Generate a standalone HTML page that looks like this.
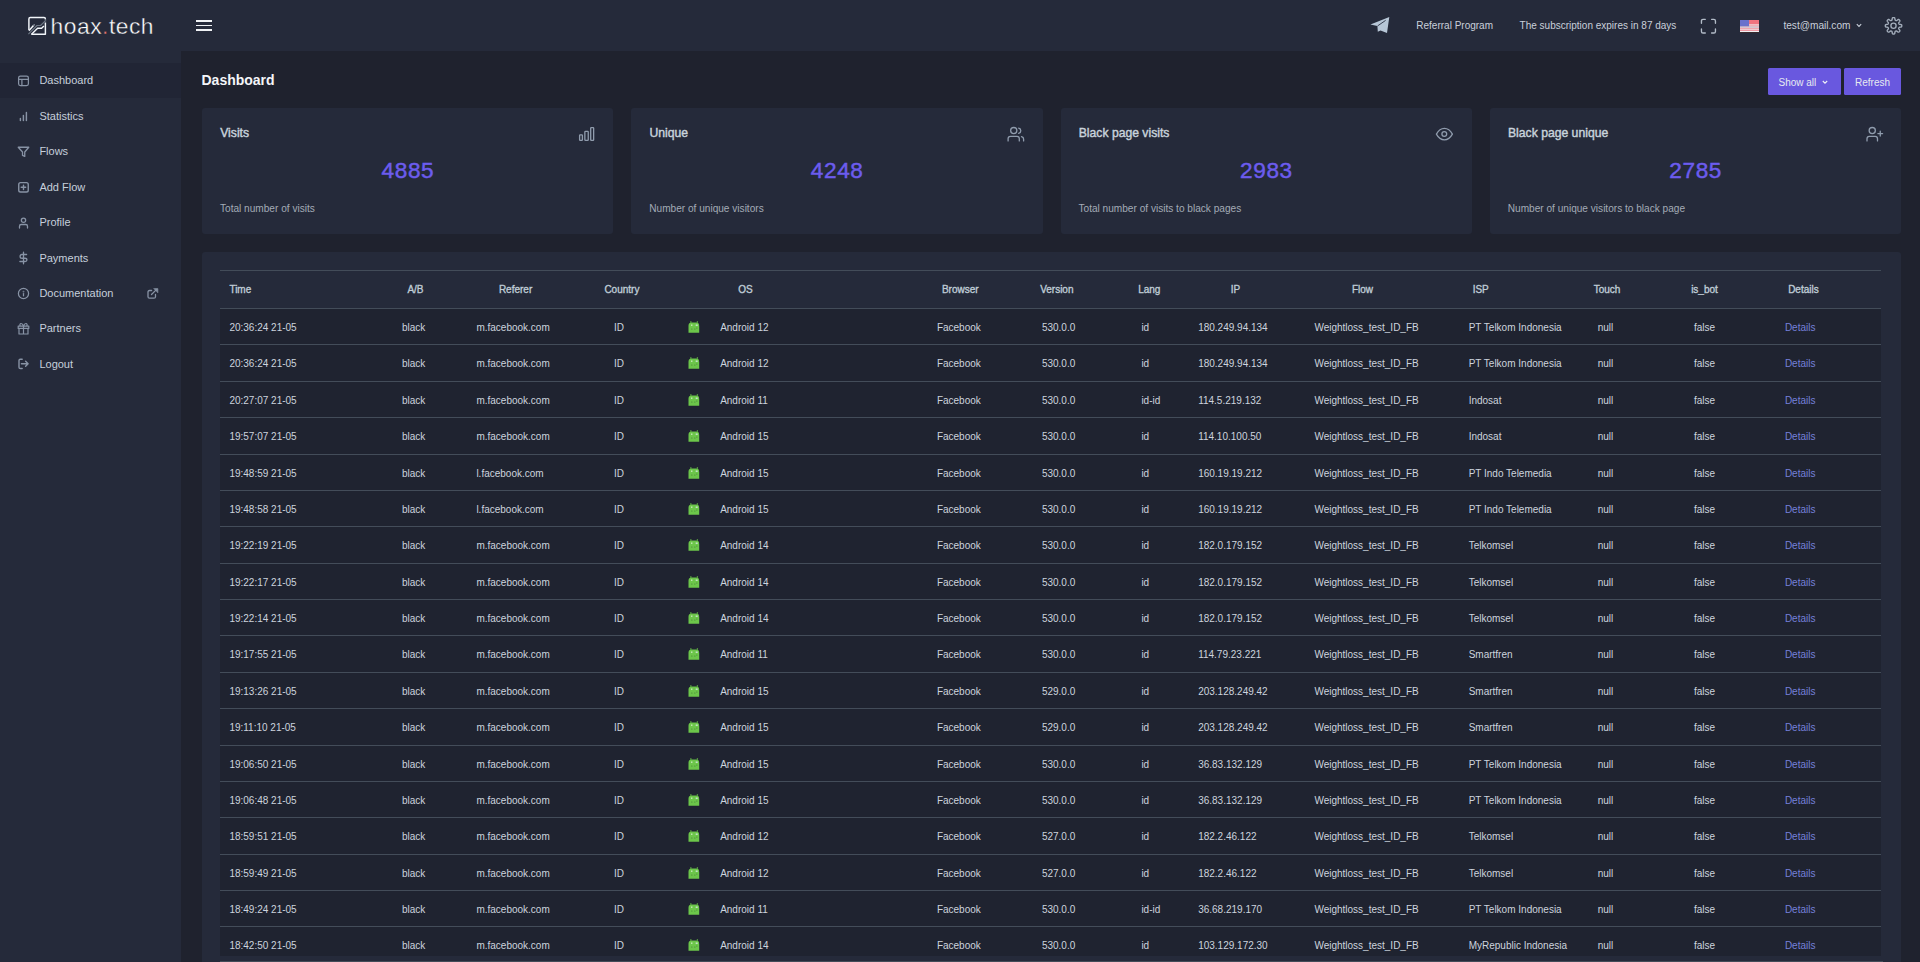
<!DOCTYPE html><html><head><meta charset="utf-8"><style>
*{box-sizing:border-box;margin:0;padding:0}
html,body{width:1920px;height:962px;overflow:hidden;background:#1f222e;font-family:"Liberation Sans",sans-serif;color:#cdd4de}
.abs{position:absolute}
#top{position:absolute;left:0;top:0;width:1920px;height:51px;background:#252a3a}
#side{position:absolute;left:0;top:51px;width:181px;height:911px;background:#252a3a}
.nav{position:absolute;left:0;width:181px;height:35px}
.nav.act{background:#212535}
.nav span{position:absolute;left:39.4px;top:0.7px;line-height:35px;font-size:11px;color:#c6cfdb}
.nav svg{position:absolute;left:17px;top:11.5px}
.card{position:absolute;background:#252a3a;border-radius:3px}
.ct{position:absolute;left:18.2px;top:16.5px;font-size:12.2px;font-weight:normal;color:#c9d3dc;line-height:16px;-webkit-text-stroke:0.4px #c9d3dc}
.cn{position:absolute;left:0;width:100%;text-align:center;top:47.6px;font-size:22.6px;color:#6c5cee;line-height:30px;letter-spacing:0.6px;text-indent:0.6px;-webkit-text-stroke:0.45px #6c5cee}
.cs{position:absolute;left:18px;top:94px;font-size:10.1px;color:#a3aab6;line-height:14px}
.ci{position:absolute}
#tbl{position:absolute;left:220px;top:270px;width:1661px}
.hr{position:absolute;left:0;width:1661px;height:1px;background:#434c59}
.row{position:absolute;left:0;width:1661px;background:#1f2330}
.row span,.hd span{position:absolute;top:0;white-space:pre;font-size:10px}
.hd span{font-weight:normal;color:#bfcbd5;line-height:37.6px;-webkit-text-stroke:0.35px #bfcbd5}
.row span{line-height:38.2px}
.row .lk{color:#7580da}
.and{position:absolute;top:12px;left:687.5px}
.btn{position:absolute;top:68px;height:27px;background:#6958df;border-radius:1.5px;color:#e6eaf0;font-size:10px;line-height:30.2px}
.tb{position:absolute;font-size:10px;color:#c9d0da;line-height:14px;top:19px;white-space:pre}
</style></head><body>

<div id="top">
<svg class="abs" style="left:25px;top:13px" width="25" height="25" viewBox="0 0 25 25" fill="none" stroke="#f2f6fa" stroke-width="1.45" stroke-linejoin="round">
<path d="M3.9 16.9V5.9Q3.9 4.55 5.3 4.55H19Q20.4 4.55 20.4 6V6.4"/>
<path d="M20.4 9.6V21.2H6.6"/>
<path d="M3.9 17.8L8.5 12.6"/>
<path d="M6.3 21.4L12.6 15.3H16.6L18.9 13"/>
<path d="M3.4 21.1L12 12.5H15.6L20 8.1" stroke="#6e7784" stroke-width="1.15"/>
<rect x="8.5" y="11.2" width="1.4" height="1.4" fill="#8c96a2" stroke="none"/>
<rect x="19.6" y="7.2" width="1.6" height="1.3" fill="#6e7784" stroke="none"/>
</svg>
<div class="abs" style="left:50.6px;top:8.5px;font-size:22.8px;line-height:34px;color:#ffffff;letter-spacing:0.5px;-webkit-text-stroke:0.4px #252a3a">hoax<span style="color:#f07872">.</span>tech</div>
<div class="abs" style="left:196px;top:20.1px;width:16px;height:1.7px;background:#f0f2f5"></div>
<div class="abs" style="left:196px;top:24.8px;width:16px;height:1.7px;background:#f0f2f5"></div>
<div class="abs" style="left:196px;top:29.4px;width:16px;height:1.7px;background:#f0f2f5"></div>
<svg class="abs" style="left:1368px;top:13px" width="24" height="24" viewBox="0 0 24 24"><path d="M2.4 11.5L21.3 4L19 20L12.5 17.4L9.8 18.8L9.4 13.1Z" fill="#b7c6d6"/><path d="M9.6 12.9L17.6 7.4" stroke="#2a3142" stroke-width="0.9"/></svg>
<div class="tb" style="left:1416.3px">Referral Program</div>
<div class="tb" style="left:1519.6px">The subscription expires in 87 days</div>
<svg class="abs" style="left:1700px;top:17.5px" width="17" height="17" viewBox="0 0 17 17" fill="none" stroke="#b3bcc8" stroke-width="1.35" stroke-linecap="round"><path d="M1.45 5.3V2.9Q1.45 1.35 3 1.35H5.3M11.6 1.35H13.9Q15.45 1.35 15.45 2.9V5.3M15.45 11V13.4Q15.45 14.95 13.9 14.95H11.6M5.3 14.95H3Q1.45 14.95 1.45 13.4V11"/></svg>
<svg class="abs" style="left:1740px;top:19.5px" width="19" height="13" viewBox="0 0 19 13"><rect width="19" height="12" fill="#eef0f4"/><rect x="9" y="0" width="10" height="4.4" fill="#f0737f"/><rect y="5.5" width="19" height="1" fill="#f0737f"/><rect y="7.6" width="19" height="1" fill="#f0737f"/><rect y="9.7" width="19" height="1" fill="#f0737f"/><rect y="6.5" width="19" height="1.1" fill="#c4cbd6"/><rect width="9" height="6.3" fill="#6a72cc"/><rect y="12" width="19" height="0.9" fill="#3a2a2a"/></svg>
<div class="tb" style="left:1783.4px;font-size:10.15px">test@mail.com</div>
<svg class="abs" style="left:1856px;top:23.3px" width="6" height="5" viewBox="0 0 6 5" fill="none" stroke="#c9d0da" stroke-width="1.1"><path d="M0.8 1.2L3 3.4L5.2 1.2"/></svg>
<svg class="abs" style="left:1881px;top:14px" width="24" height="24" viewBox="0 0 24 24" fill="none" stroke="#a3adbb" stroke-width="1.35" stroke-linecap="round" stroke-linejoin="round"><path d="M12.55 3.55 L12.77 3.56 L12.98 3.58 L13.19 3.62 L13.40 3.69 L13.60 3.84 L13.76 4.14 L13.88 4.63 L13.95 5.24 L14.01 5.73 L14.10 6.03 L14.21 6.19 L14.34 6.29 L14.47 6.37 L14.61 6.43 L14.75 6.49 L14.89 6.54 L15.03 6.60 L15.18 6.64 L15.34 6.66 L15.54 6.63 L15.81 6.48 L16.20 6.17 L16.68 5.79 L17.11 5.52 L17.44 5.43 L17.68 5.46 L17.88 5.56 L18.06 5.68 L18.23 5.82 L18.38 5.97 L18.53 6.12 L18.67 6.29 L18.79 6.47 L18.89 6.67 L18.92 6.91 L18.83 7.24 L18.56 7.67 L18.18 8.15 L17.87 8.54 L17.72 8.81 L17.69 9.01 L17.71 9.17 L17.75 9.32 L17.81 9.46 L17.86 9.60 L17.92 9.74 L17.98 9.88 L18.06 10.01 L18.16 10.14 L18.32 10.25 L18.62 10.34 L19.11 10.40 L19.72 10.47 L20.21 10.59 L20.51 10.75 L20.66 10.95 L20.73 11.16 L20.77 11.37 L20.79 11.58 L20.80 11.80 L20.79 12.02 L20.77 12.23 L20.73 12.44 L20.66 12.65 L20.51 12.85 L20.21 13.01 L19.72 13.13 L19.11 13.20 L18.62 13.26 L18.32 13.35 L18.16 13.46 L18.06 13.59 L17.98 13.72 L17.92 13.86 L17.86 14.00 L17.81 14.14 L17.75 14.28 L17.71 14.43 L17.69 14.59 L17.72 14.79 L17.87 15.06 L18.18 15.45 L18.56 15.93 L18.83 16.36 L18.92 16.69 L18.89 16.93 L18.79 17.13 L18.67 17.31 L18.53 17.48 L18.38 17.63 L18.23 17.78 L18.06 17.92 L17.88 18.04 L17.68 18.14 L17.44 18.17 L17.11 18.08 L16.68 17.81 L16.20 17.43 L15.81 17.12 L15.54 16.97 L15.34 16.94 L15.18 16.96 L15.03 17.00 L14.89 17.06 L14.75 17.11 L14.61 17.17 L14.47 17.23 L14.34 17.31 L14.21 17.41 L14.10 17.57 L14.01 17.87 L13.95 18.36 L13.88 18.97 L13.76 19.46 L13.60 19.76 L13.40 19.91 L13.19 19.98 L12.98 20.02 L12.77 20.04 L12.55 20.05 L12.33 20.04 L12.12 20.02 L11.91 19.98 L11.70 19.91 L11.50 19.76 L11.34 19.46 L11.22 18.97 L11.15 18.36 L11.09 17.87 L11.00 17.57 L10.89 17.41 L10.76 17.31 L10.63 17.23 L10.49 17.17 L10.35 17.11 L10.21 17.06 L10.07 17.00 L9.92 16.96 L9.76 16.94 L9.56 16.97 L9.29 17.12 L8.90 17.43 L8.42 17.81 L7.99 18.08 L7.66 18.17 L7.42 18.14 L7.22 18.04 L7.04 17.92 L6.87 17.78 L6.72 17.63 L6.57 17.48 L6.43 17.31 L6.31 17.13 L6.21 16.93 L6.18 16.69 L6.27 16.36 L6.54 15.93 L6.92 15.45 L7.23 15.06 L7.38 14.79 L7.41 14.59 L7.39 14.43 L7.35 14.28 L7.29 14.14 L7.24 14.00 L7.18 13.86 L7.12 13.72 L7.04 13.59 L6.94 13.46 L6.78 13.35 L6.48 13.26 L5.99 13.20 L5.38 13.13 L4.89 13.01 L4.59 12.85 L4.44 12.65 L4.37 12.44 L4.33 12.23 L4.31 12.02 L4.30 11.80 L4.31 11.58 L4.33 11.37 L4.37 11.16 L4.44 10.95 L4.59 10.75 L4.89 10.59 L5.38 10.47 L5.99 10.40 L6.48 10.34 L6.78 10.25 L6.94 10.14 L7.04 10.01 L7.12 9.88 L7.18 9.74 L7.24 9.60 L7.29 9.46 L7.35 9.32 L7.39 9.17 L7.41 9.01 L7.38 8.81 L7.23 8.54 L6.92 8.15 L6.54 7.67 L6.27 7.24 L6.18 6.91 L6.21 6.67 L6.31 6.47 L6.43 6.29 L6.57 6.12 L6.72 5.97 L6.87 5.82 L7.04 5.68 L7.22 5.56 L7.42 5.46 L7.66 5.43 L7.99 5.52 L8.42 5.79 L8.90 6.17 L9.29 6.48 L9.56 6.63 L9.76 6.66 L9.92 6.64 L10.07 6.60 L10.21 6.54 L10.35 6.49 L10.49 6.43 L10.63 6.37 L10.76 6.29 L10.89 6.19 L11.00 6.03 L11.09 5.73 L11.15 5.24 L11.22 4.63 L11.34 4.14 L11.50 3.84 L11.70 3.69 L11.91 3.62 L12.12 3.58 L12.33 3.56Z"/><circle cx="12.5" cy="11.75" r="2.6"/></svg>
</div>
<div id="side">
<div class="nav act" style="top:11.5px"><span>Dashboard</span></div>
<div class="nav" style="top:47px"><span>Statistics</span></div>
<div class="nav" style="top:82.5px"><span>Flows</span></div>
<div class="nav" style="top:118px"><span>Add Flow</span></div>
<div class="nav" style="top:153.5px"><span>Profile</span></div>
<div class="nav" style="top:189px"><span>Payments</span></div>
<div class="nav" style="top:224.5px"><span>Documentation</span></div>
<div class="nav" style="top:259.5px"><span>Partners</span></div>
<div class="nav" style="top:295px"><span>Logout</span></div>
</div>
<svg class="abs" style="left:12px;top:69px" width="24" height="24" viewBox="0 0 24 24" fill="none" stroke="#8893a5" stroke-width="1.25" stroke-linecap="round" stroke-linejoin="round"><rect x="6.6" y="7.1" width="9.8" height="9.5" rx="1.8"/><path d="M6.6 10.4H16.4M9.9 10.4V16.6"/></svg>
<svg class="abs" style="left:12px;top:104px" width="24" height="24" viewBox="0 0 24 24" fill="none" stroke="#8893a5" stroke-width="1.45" stroke-linecap="round" stroke-linejoin="round"><path d="M8.4 14.5V16.5M11.4 11.5V16.5M14.4 8.5V16.5"/></svg>
<svg class="abs" style="left:12px;top:140px" width="24" height="24" viewBox="0 0 24 24" fill="none" stroke="#8893a5" stroke-width="1.3" stroke-linecap="round" stroke-linejoin="round"><path d="M6.25 7.25H16.75L12.75 12V16.4L10.5 15.4V12Z"/></svg>
<svg class="abs" style="left:12px;top:175px" width="24" height="24" viewBox="0 0 24 24" fill="none" stroke="#8893a5" stroke-width="1.4" stroke-linecap="round" stroke-linejoin="round"><rect x="6.75" y="7.6" width="9.5" height="9.4" rx="1.8"/><path d="M11.5 10.1V14.6M9.2 12.3H13.7"/></svg>
<svg class="abs" style="left:12px;top:211px" width="24" height="24" viewBox="0 0 24 24" fill="none" stroke="#8893a5" stroke-width="1.3" stroke-linecap="round" stroke-linejoin="round"><circle cx="11.5" cy="9.25" r="2.15"/><path d="M7.5 17V15.2Q7.5 13.5 9.2 13.5H13.8Q15.5 13.5 15.5 15.2V17"/></svg>
<svg class="abs" style="left:12px;top:246px" width="24" height="24" viewBox="0 0 24 24" fill="none" stroke="#8893a5" stroke-width="1.3" stroke-linecap="round" stroke-linejoin="round"><path d="M14.6 8.5H10Q8.1 8.5 8.1 10.4Q8.1 12.25 10 12.25H13Q14.9 12.25 14.9 14Q14.9 15.5 13 15.5H7.9M11.5 6.2V17.8"/></svg>
<svg class="abs" style="left:12px;top:281px" width="24" height="24" viewBox="0 0 24 24" fill="none" stroke="#8893a5" stroke-width="1.25" stroke-linecap="round" stroke-linejoin="round"><circle cx="11.5" cy="12.5" r="5.1"/><path d="M11.5 12.6V14.8"/><circle cx="11.5" cy="10.5" r="0.25" fill="#8893a5"/></svg>
<svg class="abs" style="left:12px;top:316px" width="24" height="24" viewBox="0 0 24 24" fill="none" stroke="#8893a5" stroke-width="1.2" stroke-linecap="round" stroke-linejoin="round"><path d="M7 12.5V18H16V12.5M6.2 10.1H16.8V12.4H6.2ZM11.5 10.1V18M11.5 10Q10.5 7.3 8.8 7.5Q7.4 7.8 8.2 10M11.5 10Q12.5 7.3 14.2 7.5Q15.6 7.8 14.8 10"/></svg>
<svg class="abs" style="left:12px;top:352px" width="24" height="24" viewBox="0 0 24 24" fill="none" stroke="#8893a5" stroke-width="1.4" stroke-linecap="round" stroke-linejoin="round"><path d="M10.2 7.3H8.3Q7 7.3 7 8.6V15.2Q7 16.5 8.3 16.5H10.2M9.4 11.8H16M13.6 9.3L16.1 11.8L13.6 14.3"/></svg>
<svg class="abs" style="left:140px;top:281px" width="24" height="24" viewBox="0 0 24 24" fill="none" stroke="#8893a5" stroke-width="1.3" stroke-linecap="round" stroke-linejoin="round"><path d="M11.6 9.5H9.5Q8 9.5 8 11V15.7Q8 17.2 9.5 17.2H14Q15.5 17.2 15.5 15.7V13.4M11.5 13.5L16.4 8.6"/><path d="M14 7.6H17.9V11.5Z" fill="#8893a5" stroke-width="0.6"/></svg>
<div class="abs" style="left:201.5px;top:71px;font-size:14px;font-weight:bold;color:#f4f6f9;line-height:18px">Dashboard</div>
<div class="btn" style="left:1767.5px;width:73px"><span class="abs" style="left:11px">Show all</span><svg class="abs" style="left:54px;top:11.8px" width="6" height="5" viewBox="0 0 6 5" fill="none" stroke="#eef0f6" stroke-width="1.1"><path d="M0.8 1L3 3.2L5.2 1"/></svg></div>
<div class="btn" style="left:1844px;width:57px"><span class="abs" style="left:11px">Refresh</span></div>
<div class="card" style="left:202px;top:108px;width:411.25px;height:126px"><div class="ct">Visits</div><div class="cn">4885</div><div class="cs">Total number of visits</div></div>
<svg class="abs" style="left:575px;top:122px" width="24" height="24" viewBox="0 0 24 24" fill="none" stroke="#909cad" stroke-width="1.3" stroke-linecap="round" stroke-linejoin="round"><rect x="4.6" y="12.85" width="2.8" height="5.6" rx="0.6"/><rect x="9.85" y="9.35" width="3.4" height="9.1" rx="0.6"/><rect x="15.7" y="5.6" width="2.95" height="12.85" rx="0.6"/></svg>
<div class="card" style="left:631.25px;top:108px;width:411.25px;height:126px"><div class="ct">Unique</div><div class="cn">4248</div><div class="cs">Number of unique visitors</div></div>
<svg class="abs" style="left:1004px;top:122px" width="24" height="24" viewBox="0 0 24 24" fill="none" stroke="#909cad" stroke-width="1.3" stroke-linecap="round" stroke-linejoin="round"><circle cx="9.75" cy="8.6" r="3.1"/><path d="M4.1 18.9V16.6Q4.1 14.3 6.4 14.3H13Q15.3 14.3 15.3 16.6V18.9M14.7 6.2A2.6 2.6 0 0 1 14.7 11.3M17.5 14.6Q19.6 15.2 19.6 17V18.9"/></svg>
<div class="card" style="left:1060.5px;top:108px;width:411.25px;height:126px"><div class="ct">Black page visits</div><div class="cn">2983</div><div class="cs">Total number of visits to black pages</div></div>
<svg class="abs" style="left:1432px;top:122px" width="24" height="24" viewBox="0 0 24 24" fill="none" stroke="#909cad" stroke-width="1.3" stroke-linecap="round" stroke-linejoin="round"><path d="M4.4 12.1C6.5 8.3 9.2 6.4 12.4 6.4C15.6 6.4 18.3 8.3 20.4 12.1C18.3 15.9 15.6 17.8 12.4 17.8C9.2 17.8 6.5 15.9 4.4 12.1Z"/><circle cx="12.3" cy="12" r="2.4"/></svg>
<div class="card" style="left:1489.75px;top:108px;width:411.25px;height:126px"><div class="ct">Black page unique</div><div class="cn">2785</div><div class="cs">Number of unique visitors to black page</div></div>
<svg class="abs" style="left:1862px;top:122px" width="24" height="24" viewBox="0 0 24 24" fill="none" stroke="#909cad" stroke-width="1.3" stroke-linecap="round" stroke-linejoin="round"><circle cx="10.25" cy="8.6" r="3.1"/><path d="M5 18.9V16.7Q5 14.4 7.3 14.4H13.2Q15.5 14.4 15.5 16.7V18.9M15.9 11.6H20.6M18.25 9.2V14"/></svg>
<div class="card" style="left:202px;top:252px;width:1699px;height:740px"></div>
<div id="tbl">
<div class="hr" style="top:0"></div>
<div class="hd abs" style="left:0;top:1px;width:1661px;height:37px">
<span class="" style="left:9.40px">Time</span>
<span class="" style="left:187.40px">A/B</span>
<span class="" style="left:278.90px">Referer</span>
<span class="" style="left:384.40px">Country</span>
<span class="" style="left:518.15px">OS</span>
<span class="" style="left:721.90px">Browser</span>
<span class="" style="left:820.15px">Version</span>
<span class="" style="left:918.15px">Lang</span>
<span class="" style="left:1010.65px">IP</span>
<span class="" style="left:1131.90px">Flow</span>
<span class="" style="left:1252.65px">ISP</span>
<span class="" style="left:1373.65px">Touch</span>
<span class="" style="left:1471.15px">is_bot</span>
<span class="" style="left:1568.15px">Details</span>
</div>
<div class="hr" style="top:38.000px"></div>
<div class="row" style="top:39.000px;height:35.375px">
<span class="" style="left:9.40px">20:36:24 21-05</span>
<span class="" style="left:181.90px">black</span>
<span class="" style="left:256.40px">m.facebook.com</span>
<span class="" style="left:393.90px">ID</span>
<span class="" style="left:500.15px">Android 12</span>
<span class="" style="left:716.90px">Facebook</span>
<span class="" style="left:821.90px">530.0.0</span>
<span class="" style="left:921.40px">id</span>
<span class="" style="left:978.15px">180.249.94.134</span>
<span class="" style="left:1094.40px">Weightloss_test_ID_FB</span>
<span class="" style="left:1248.65px">PT Telkom Indonesia</span>
<span class="" style="left:1377.65px">null</span>
<span class="" style="left:1473.90px">false</span>
<span class="lk" style="left:1564.90px">Details</span>
<svg class="and" style="left:467.5px" width="13" height="13" viewBox="0 0 13 13"><path d="M0.5 11.8V4.7Q0.5 1.5 3.7 1.5H8Q11.2 1.5 11.2 4.7V11.8Z" fill="#6cc64a"/><circle cx="2.9" cy="1.1" r="0.75" fill="#6cc64a"/><circle cx="9.4" cy="1.1" r="0.75" fill="#6cc64a"/><rect x="3.1" y="3.6" width="1.3" height="1.1" fill="#eef6ea"/><rect x="7.7" y="3.6" width="2" height="1.1" fill="#e4ecf6"/><circle cx="3.9" cy="8.1" r="0.5" fill="#3d6a34"/><circle cx="6.9" cy="8.1" r="0.5" fill="#3d6a34"/><circle cx="8.9" cy="7.1" r="0.5" fill="#3d6a34"/></svg>
</div>
<div class="hr" style="top:74.375px"></div>
<div class="row" style="top:75.375px;height:35.375px">
<span class="" style="left:9.40px">20:36:24 21-05</span>
<span class="" style="left:181.90px">black</span>
<span class="" style="left:256.40px">m.facebook.com</span>
<span class="" style="left:393.90px">ID</span>
<span class="" style="left:500.15px">Android 12</span>
<span class="" style="left:716.90px">Facebook</span>
<span class="" style="left:821.90px">530.0.0</span>
<span class="" style="left:921.40px">id</span>
<span class="" style="left:978.15px">180.249.94.134</span>
<span class="" style="left:1094.40px">Weightloss_test_ID_FB</span>
<span class="" style="left:1248.65px">PT Telkom Indonesia</span>
<span class="" style="left:1377.65px">null</span>
<span class="" style="left:1473.90px">false</span>
<span class="lk" style="left:1564.90px">Details</span>
<svg class="and" style="left:467.5px" width="13" height="13" viewBox="0 0 13 13"><path d="M0.5 11.8V4.7Q0.5 1.5 3.7 1.5H8Q11.2 1.5 11.2 4.7V11.8Z" fill="#6cc64a"/><circle cx="2.9" cy="1.1" r="0.75" fill="#6cc64a"/><circle cx="9.4" cy="1.1" r="0.75" fill="#6cc64a"/><rect x="3.1" y="3.6" width="1.3" height="1.1" fill="#eef6ea"/><rect x="7.7" y="3.6" width="2" height="1.1" fill="#e4ecf6"/><circle cx="3.9" cy="8.1" r="0.5" fill="#3d6a34"/><circle cx="6.9" cy="8.1" r="0.5" fill="#3d6a34"/><circle cx="8.9" cy="7.1" r="0.5" fill="#3d6a34"/></svg>
</div>
<div class="hr" style="top:110.750px"></div>
<div class="row" style="top:111.750px;height:35.375px">
<span class="" style="left:9.40px">20:27:07 21-05</span>
<span class="" style="left:181.90px">black</span>
<span class="" style="left:256.40px">m.facebook.com</span>
<span class="" style="left:393.90px">ID</span>
<span class="" style="left:500.15px">Android 11</span>
<span class="" style="left:716.90px">Facebook</span>
<span class="" style="left:821.90px">530.0.0</span>
<span class="" style="left:921.40px">id-id</span>
<span class="" style="left:978.15px">114.5.219.132</span>
<span class="" style="left:1094.40px">Weightloss_test_ID_FB</span>
<span class="" style="left:1248.65px">Indosat</span>
<span class="" style="left:1377.65px">null</span>
<span class="" style="left:1473.90px">false</span>
<span class="lk" style="left:1564.90px">Details</span>
<svg class="and" style="left:467.5px" width="13" height="13" viewBox="0 0 13 13"><path d="M0.5 11.8V4.7Q0.5 1.5 3.7 1.5H8Q11.2 1.5 11.2 4.7V11.8Z" fill="#6cc64a"/><circle cx="2.9" cy="1.1" r="0.75" fill="#6cc64a"/><circle cx="9.4" cy="1.1" r="0.75" fill="#6cc64a"/><rect x="3.1" y="3.6" width="1.3" height="1.1" fill="#eef6ea"/><rect x="7.7" y="3.6" width="2" height="1.1" fill="#e4ecf6"/><circle cx="3.9" cy="8.1" r="0.5" fill="#3d6a34"/><circle cx="6.9" cy="8.1" r="0.5" fill="#3d6a34"/><circle cx="8.9" cy="7.1" r="0.5" fill="#3d6a34"/></svg>
</div>
<div class="hr" style="top:147.125px"></div>
<div class="row" style="top:148.125px;height:35.375px">
<span class="" style="left:9.40px">19:57:07 21-05</span>
<span class="" style="left:181.90px">black</span>
<span class="" style="left:256.40px">m.facebook.com</span>
<span class="" style="left:393.90px">ID</span>
<span class="" style="left:500.15px">Android 15</span>
<span class="" style="left:716.90px">Facebook</span>
<span class="" style="left:821.90px">530.0.0</span>
<span class="" style="left:921.40px">id</span>
<span class="" style="left:978.15px">114.10.100.50</span>
<span class="" style="left:1094.40px">Weightloss_test_ID_FB</span>
<span class="" style="left:1248.65px">Indosat</span>
<span class="" style="left:1377.65px">null</span>
<span class="" style="left:1473.90px">false</span>
<span class="lk" style="left:1564.90px">Details</span>
<svg class="and" style="left:467.5px" width="13" height="13" viewBox="0 0 13 13"><path d="M0.5 11.8V4.7Q0.5 1.5 3.7 1.5H8Q11.2 1.5 11.2 4.7V11.8Z" fill="#6cc64a"/><circle cx="2.9" cy="1.1" r="0.75" fill="#6cc64a"/><circle cx="9.4" cy="1.1" r="0.75" fill="#6cc64a"/><rect x="3.1" y="3.6" width="1.3" height="1.1" fill="#eef6ea"/><rect x="7.7" y="3.6" width="2" height="1.1" fill="#e4ecf6"/><circle cx="3.9" cy="8.1" r="0.5" fill="#3d6a34"/><circle cx="6.9" cy="8.1" r="0.5" fill="#3d6a34"/><circle cx="8.9" cy="7.1" r="0.5" fill="#3d6a34"/></svg>
</div>
<div class="hr" style="top:183.500px"></div>
<div class="row" style="top:184.500px;height:35.375px">
<span class="" style="left:9.40px">19:48:59 21-05</span>
<span class="" style="left:181.90px">black</span>
<span class="" style="left:256.40px">l.facebook.com</span>
<span class="" style="left:393.90px">ID</span>
<span class="" style="left:500.15px">Android 15</span>
<span class="" style="left:716.90px">Facebook</span>
<span class="" style="left:821.90px">530.0.0</span>
<span class="" style="left:921.40px">id</span>
<span class="" style="left:978.15px">160.19.19.212</span>
<span class="" style="left:1094.40px">Weightloss_test_ID_FB</span>
<span class="" style="left:1248.65px">PT Indo Telemedia</span>
<span class="" style="left:1377.65px">null</span>
<span class="" style="left:1473.90px">false</span>
<span class="lk" style="left:1564.90px">Details</span>
<svg class="and" style="left:467.5px" width="13" height="13" viewBox="0 0 13 13"><path d="M0.5 11.8V4.7Q0.5 1.5 3.7 1.5H8Q11.2 1.5 11.2 4.7V11.8Z" fill="#6cc64a"/><circle cx="2.9" cy="1.1" r="0.75" fill="#6cc64a"/><circle cx="9.4" cy="1.1" r="0.75" fill="#6cc64a"/><rect x="3.1" y="3.6" width="1.3" height="1.1" fill="#eef6ea"/><rect x="7.7" y="3.6" width="2" height="1.1" fill="#e4ecf6"/><circle cx="3.9" cy="8.1" r="0.5" fill="#3d6a34"/><circle cx="6.9" cy="8.1" r="0.5" fill="#3d6a34"/><circle cx="8.9" cy="7.1" r="0.5" fill="#3d6a34"/></svg>
</div>
<div class="hr" style="top:219.875px"></div>
<div class="row" style="top:220.875px;height:35.375px">
<span class="" style="left:9.40px">19:48:58 21-05</span>
<span class="" style="left:181.90px">black</span>
<span class="" style="left:256.40px">l.facebook.com</span>
<span class="" style="left:393.90px">ID</span>
<span class="" style="left:500.15px">Android 15</span>
<span class="" style="left:716.90px">Facebook</span>
<span class="" style="left:821.90px">530.0.0</span>
<span class="" style="left:921.40px">id</span>
<span class="" style="left:978.15px">160.19.19.212</span>
<span class="" style="left:1094.40px">Weightloss_test_ID_FB</span>
<span class="" style="left:1248.65px">PT Indo Telemedia</span>
<span class="" style="left:1377.65px">null</span>
<span class="" style="left:1473.90px">false</span>
<span class="lk" style="left:1564.90px">Details</span>
<svg class="and" style="left:467.5px" width="13" height="13" viewBox="0 0 13 13"><path d="M0.5 11.8V4.7Q0.5 1.5 3.7 1.5H8Q11.2 1.5 11.2 4.7V11.8Z" fill="#6cc64a"/><circle cx="2.9" cy="1.1" r="0.75" fill="#6cc64a"/><circle cx="9.4" cy="1.1" r="0.75" fill="#6cc64a"/><rect x="3.1" y="3.6" width="1.3" height="1.1" fill="#eef6ea"/><rect x="7.7" y="3.6" width="2" height="1.1" fill="#e4ecf6"/><circle cx="3.9" cy="8.1" r="0.5" fill="#3d6a34"/><circle cx="6.9" cy="8.1" r="0.5" fill="#3d6a34"/><circle cx="8.9" cy="7.1" r="0.5" fill="#3d6a34"/></svg>
</div>
<div class="hr" style="top:256.250px"></div>
<div class="row" style="top:257.250px;height:35.375px">
<span class="" style="left:9.40px">19:22:19 21-05</span>
<span class="" style="left:181.90px">black</span>
<span class="" style="left:256.40px">m.facebook.com</span>
<span class="" style="left:393.90px">ID</span>
<span class="" style="left:500.15px">Android 14</span>
<span class="" style="left:716.90px">Facebook</span>
<span class="" style="left:821.90px">530.0.0</span>
<span class="" style="left:921.40px">id</span>
<span class="" style="left:978.15px">182.0.179.152</span>
<span class="" style="left:1094.40px">Weightloss_test_ID_FB</span>
<span class="" style="left:1248.65px">Telkomsel</span>
<span class="" style="left:1377.65px">null</span>
<span class="" style="left:1473.90px">false</span>
<span class="lk" style="left:1564.90px">Details</span>
<svg class="and" style="left:467.5px" width="13" height="13" viewBox="0 0 13 13"><path d="M0.5 11.8V4.7Q0.5 1.5 3.7 1.5H8Q11.2 1.5 11.2 4.7V11.8Z" fill="#6cc64a"/><circle cx="2.9" cy="1.1" r="0.75" fill="#6cc64a"/><circle cx="9.4" cy="1.1" r="0.75" fill="#6cc64a"/><rect x="3.1" y="3.6" width="1.3" height="1.1" fill="#eef6ea"/><rect x="7.7" y="3.6" width="2" height="1.1" fill="#e4ecf6"/><circle cx="3.9" cy="8.1" r="0.5" fill="#3d6a34"/><circle cx="6.9" cy="8.1" r="0.5" fill="#3d6a34"/><circle cx="8.9" cy="7.1" r="0.5" fill="#3d6a34"/></svg>
</div>
<div class="hr" style="top:292.625px"></div>
<div class="row" style="top:293.625px;height:35.375px">
<span class="" style="left:9.40px">19:22:17 21-05</span>
<span class="" style="left:181.90px">black</span>
<span class="" style="left:256.40px">m.facebook.com</span>
<span class="" style="left:393.90px">ID</span>
<span class="" style="left:500.15px">Android 14</span>
<span class="" style="left:716.90px">Facebook</span>
<span class="" style="left:821.90px">530.0.0</span>
<span class="" style="left:921.40px">id</span>
<span class="" style="left:978.15px">182.0.179.152</span>
<span class="" style="left:1094.40px">Weightloss_test_ID_FB</span>
<span class="" style="left:1248.65px">Telkomsel</span>
<span class="" style="left:1377.65px">null</span>
<span class="" style="left:1473.90px">false</span>
<span class="lk" style="left:1564.90px">Details</span>
<svg class="and" style="left:467.5px" width="13" height="13" viewBox="0 0 13 13"><path d="M0.5 11.8V4.7Q0.5 1.5 3.7 1.5H8Q11.2 1.5 11.2 4.7V11.8Z" fill="#6cc64a"/><circle cx="2.9" cy="1.1" r="0.75" fill="#6cc64a"/><circle cx="9.4" cy="1.1" r="0.75" fill="#6cc64a"/><rect x="3.1" y="3.6" width="1.3" height="1.1" fill="#eef6ea"/><rect x="7.7" y="3.6" width="2" height="1.1" fill="#e4ecf6"/><circle cx="3.9" cy="8.1" r="0.5" fill="#3d6a34"/><circle cx="6.9" cy="8.1" r="0.5" fill="#3d6a34"/><circle cx="8.9" cy="7.1" r="0.5" fill="#3d6a34"/></svg>
</div>
<div class="hr" style="top:329.000px"></div>
<div class="row" style="top:330.000px;height:35.375px">
<span class="" style="left:9.40px">19:22:14 21-05</span>
<span class="" style="left:181.90px">black</span>
<span class="" style="left:256.40px">m.facebook.com</span>
<span class="" style="left:393.90px">ID</span>
<span class="" style="left:500.15px">Android 14</span>
<span class="" style="left:716.90px">Facebook</span>
<span class="" style="left:821.90px">530.0.0</span>
<span class="" style="left:921.40px">id</span>
<span class="" style="left:978.15px">182.0.179.152</span>
<span class="" style="left:1094.40px">Weightloss_test_ID_FB</span>
<span class="" style="left:1248.65px">Telkomsel</span>
<span class="" style="left:1377.65px">null</span>
<span class="" style="left:1473.90px">false</span>
<span class="lk" style="left:1564.90px">Details</span>
<svg class="and" style="left:467.5px" width="13" height="13" viewBox="0 0 13 13"><path d="M0.5 11.8V4.7Q0.5 1.5 3.7 1.5H8Q11.2 1.5 11.2 4.7V11.8Z" fill="#6cc64a"/><circle cx="2.9" cy="1.1" r="0.75" fill="#6cc64a"/><circle cx="9.4" cy="1.1" r="0.75" fill="#6cc64a"/><rect x="3.1" y="3.6" width="1.3" height="1.1" fill="#eef6ea"/><rect x="7.7" y="3.6" width="2" height="1.1" fill="#e4ecf6"/><circle cx="3.9" cy="8.1" r="0.5" fill="#3d6a34"/><circle cx="6.9" cy="8.1" r="0.5" fill="#3d6a34"/><circle cx="8.9" cy="7.1" r="0.5" fill="#3d6a34"/></svg>
</div>
<div class="hr" style="top:365.375px"></div>
<div class="row" style="top:366.375px;height:35.375px">
<span class="" style="left:9.40px">19:17:55 21-05</span>
<span class="" style="left:181.90px">black</span>
<span class="" style="left:256.40px">m.facebook.com</span>
<span class="" style="left:393.90px">ID</span>
<span class="" style="left:500.15px">Android 11</span>
<span class="" style="left:716.90px">Facebook</span>
<span class="" style="left:821.90px">530.0.0</span>
<span class="" style="left:921.40px">id</span>
<span class="" style="left:978.15px">114.79.23.221</span>
<span class="" style="left:1094.40px">Weightloss_test_ID_FB</span>
<span class="" style="left:1248.65px">Smartfren</span>
<span class="" style="left:1377.65px">null</span>
<span class="" style="left:1473.90px">false</span>
<span class="lk" style="left:1564.90px">Details</span>
<svg class="and" style="left:467.5px" width="13" height="13" viewBox="0 0 13 13"><path d="M0.5 11.8V4.7Q0.5 1.5 3.7 1.5H8Q11.2 1.5 11.2 4.7V11.8Z" fill="#6cc64a"/><circle cx="2.9" cy="1.1" r="0.75" fill="#6cc64a"/><circle cx="9.4" cy="1.1" r="0.75" fill="#6cc64a"/><rect x="3.1" y="3.6" width="1.3" height="1.1" fill="#eef6ea"/><rect x="7.7" y="3.6" width="2" height="1.1" fill="#e4ecf6"/><circle cx="3.9" cy="8.1" r="0.5" fill="#3d6a34"/><circle cx="6.9" cy="8.1" r="0.5" fill="#3d6a34"/><circle cx="8.9" cy="7.1" r="0.5" fill="#3d6a34"/></svg>
</div>
<div class="hr" style="top:401.750px"></div>
<div class="row" style="top:402.750px;height:35.375px">
<span class="" style="left:9.40px">19:13:26 21-05</span>
<span class="" style="left:181.90px">black</span>
<span class="" style="left:256.40px">m.facebook.com</span>
<span class="" style="left:393.90px">ID</span>
<span class="" style="left:500.15px">Android 15</span>
<span class="" style="left:716.90px">Facebook</span>
<span class="" style="left:821.90px">529.0.0</span>
<span class="" style="left:921.40px">id</span>
<span class="" style="left:978.15px">203.128.249.42</span>
<span class="" style="left:1094.40px">Weightloss_test_ID_FB</span>
<span class="" style="left:1248.65px">Smartfren</span>
<span class="" style="left:1377.65px">null</span>
<span class="" style="left:1473.90px">false</span>
<span class="lk" style="left:1564.90px">Details</span>
<svg class="and" style="left:467.5px" width="13" height="13" viewBox="0 0 13 13"><path d="M0.5 11.8V4.7Q0.5 1.5 3.7 1.5H8Q11.2 1.5 11.2 4.7V11.8Z" fill="#6cc64a"/><circle cx="2.9" cy="1.1" r="0.75" fill="#6cc64a"/><circle cx="9.4" cy="1.1" r="0.75" fill="#6cc64a"/><rect x="3.1" y="3.6" width="1.3" height="1.1" fill="#eef6ea"/><rect x="7.7" y="3.6" width="2" height="1.1" fill="#e4ecf6"/><circle cx="3.9" cy="8.1" r="0.5" fill="#3d6a34"/><circle cx="6.9" cy="8.1" r="0.5" fill="#3d6a34"/><circle cx="8.9" cy="7.1" r="0.5" fill="#3d6a34"/></svg>
</div>
<div class="hr" style="top:438.125px"></div>
<div class="row" style="top:439.125px;height:35.375px">
<span class="" style="left:9.40px">19:11:10 21-05</span>
<span class="" style="left:181.90px">black</span>
<span class="" style="left:256.40px">m.facebook.com</span>
<span class="" style="left:393.90px">ID</span>
<span class="" style="left:500.15px">Android 15</span>
<span class="" style="left:716.90px">Facebook</span>
<span class="" style="left:821.90px">529.0.0</span>
<span class="" style="left:921.40px">id</span>
<span class="" style="left:978.15px">203.128.249.42</span>
<span class="" style="left:1094.40px">Weightloss_test_ID_FB</span>
<span class="" style="left:1248.65px">Smartfren</span>
<span class="" style="left:1377.65px">null</span>
<span class="" style="left:1473.90px">false</span>
<span class="lk" style="left:1564.90px">Details</span>
<svg class="and" style="left:467.5px" width="13" height="13" viewBox="0 0 13 13"><path d="M0.5 11.8V4.7Q0.5 1.5 3.7 1.5H8Q11.2 1.5 11.2 4.7V11.8Z" fill="#6cc64a"/><circle cx="2.9" cy="1.1" r="0.75" fill="#6cc64a"/><circle cx="9.4" cy="1.1" r="0.75" fill="#6cc64a"/><rect x="3.1" y="3.6" width="1.3" height="1.1" fill="#eef6ea"/><rect x="7.7" y="3.6" width="2" height="1.1" fill="#e4ecf6"/><circle cx="3.9" cy="8.1" r="0.5" fill="#3d6a34"/><circle cx="6.9" cy="8.1" r="0.5" fill="#3d6a34"/><circle cx="8.9" cy="7.1" r="0.5" fill="#3d6a34"/></svg>
</div>
<div class="hr" style="top:474.500px"></div>
<div class="row" style="top:475.500px;height:35.375px">
<span class="" style="left:9.40px">19:06:50 21-05</span>
<span class="" style="left:181.90px">black</span>
<span class="" style="left:256.40px">m.facebook.com</span>
<span class="" style="left:393.90px">ID</span>
<span class="" style="left:500.15px">Android 15</span>
<span class="" style="left:716.90px">Facebook</span>
<span class="" style="left:821.90px">530.0.0</span>
<span class="" style="left:921.40px">id</span>
<span class="" style="left:978.15px">36.83.132.129</span>
<span class="" style="left:1094.40px">Weightloss_test_ID_FB</span>
<span class="" style="left:1248.65px">PT Telkom Indonesia</span>
<span class="" style="left:1377.65px">null</span>
<span class="" style="left:1473.90px">false</span>
<span class="lk" style="left:1564.90px">Details</span>
<svg class="and" style="left:467.5px" width="13" height="13" viewBox="0 0 13 13"><path d="M0.5 11.8V4.7Q0.5 1.5 3.7 1.5H8Q11.2 1.5 11.2 4.7V11.8Z" fill="#6cc64a"/><circle cx="2.9" cy="1.1" r="0.75" fill="#6cc64a"/><circle cx="9.4" cy="1.1" r="0.75" fill="#6cc64a"/><rect x="3.1" y="3.6" width="1.3" height="1.1" fill="#eef6ea"/><rect x="7.7" y="3.6" width="2" height="1.1" fill="#e4ecf6"/><circle cx="3.9" cy="8.1" r="0.5" fill="#3d6a34"/><circle cx="6.9" cy="8.1" r="0.5" fill="#3d6a34"/><circle cx="8.9" cy="7.1" r="0.5" fill="#3d6a34"/></svg>
</div>
<div class="hr" style="top:510.875px"></div>
<div class="row" style="top:511.875px;height:35.375px">
<span class="" style="left:9.40px">19:06:48 21-05</span>
<span class="" style="left:181.90px">black</span>
<span class="" style="left:256.40px">m.facebook.com</span>
<span class="" style="left:393.90px">ID</span>
<span class="" style="left:500.15px">Android 15</span>
<span class="" style="left:716.90px">Facebook</span>
<span class="" style="left:821.90px">530.0.0</span>
<span class="" style="left:921.40px">id</span>
<span class="" style="left:978.15px">36.83.132.129</span>
<span class="" style="left:1094.40px">Weightloss_test_ID_FB</span>
<span class="" style="left:1248.65px">PT Telkom Indonesia</span>
<span class="" style="left:1377.65px">null</span>
<span class="" style="left:1473.90px">false</span>
<span class="lk" style="left:1564.90px">Details</span>
<svg class="and" style="left:467.5px" width="13" height="13" viewBox="0 0 13 13"><path d="M0.5 11.8V4.7Q0.5 1.5 3.7 1.5H8Q11.2 1.5 11.2 4.7V11.8Z" fill="#6cc64a"/><circle cx="2.9" cy="1.1" r="0.75" fill="#6cc64a"/><circle cx="9.4" cy="1.1" r="0.75" fill="#6cc64a"/><rect x="3.1" y="3.6" width="1.3" height="1.1" fill="#eef6ea"/><rect x="7.7" y="3.6" width="2" height="1.1" fill="#e4ecf6"/><circle cx="3.9" cy="8.1" r="0.5" fill="#3d6a34"/><circle cx="6.9" cy="8.1" r="0.5" fill="#3d6a34"/><circle cx="8.9" cy="7.1" r="0.5" fill="#3d6a34"/></svg>
</div>
<div class="hr" style="top:547.250px"></div>
<div class="row" style="top:548.250px;height:35.375px">
<span class="" style="left:9.40px">18:59:51 21-05</span>
<span class="" style="left:181.90px">black</span>
<span class="" style="left:256.40px">m.facebook.com</span>
<span class="" style="left:393.90px">ID</span>
<span class="" style="left:500.15px">Android 12</span>
<span class="" style="left:716.90px">Facebook</span>
<span class="" style="left:821.90px">527.0.0</span>
<span class="" style="left:921.40px">id</span>
<span class="" style="left:978.15px">182.2.46.122</span>
<span class="" style="left:1094.40px">Weightloss_test_ID_FB</span>
<span class="" style="left:1248.65px">Telkomsel</span>
<span class="" style="left:1377.65px">null</span>
<span class="" style="left:1473.90px">false</span>
<span class="lk" style="left:1564.90px">Details</span>
<svg class="and" style="left:467.5px" width="13" height="13" viewBox="0 0 13 13"><path d="M0.5 11.8V4.7Q0.5 1.5 3.7 1.5H8Q11.2 1.5 11.2 4.7V11.8Z" fill="#6cc64a"/><circle cx="2.9" cy="1.1" r="0.75" fill="#6cc64a"/><circle cx="9.4" cy="1.1" r="0.75" fill="#6cc64a"/><rect x="3.1" y="3.6" width="1.3" height="1.1" fill="#eef6ea"/><rect x="7.7" y="3.6" width="2" height="1.1" fill="#e4ecf6"/><circle cx="3.9" cy="8.1" r="0.5" fill="#3d6a34"/><circle cx="6.9" cy="8.1" r="0.5" fill="#3d6a34"/><circle cx="8.9" cy="7.1" r="0.5" fill="#3d6a34"/></svg>
</div>
<div class="hr" style="top:583.625px"></div>
<div class="row" style="top:584.625px;height:35.375px">
<span class="" style="left:9.40px">18:59:49 21-05</span>
<span class="" style="left:181.90px">black</span>
<span class="" style="left:256.40px">m.facebook.com</span>
<span class="" style="left:393.90px">ID</span>
<span class="" style="left:500.15px">Android 12</span>
<span class="" style="left:716.90px">Facebook</span>
<span class="" style="left:821.90px">527.0.0</span>
<span class="" style="left:921.40px">id</span>
<span class="" style="left:978.15px">182.2.46.122</span>
<span class="" style="left:1094.40px">Weightloss_test_ID_FB</span>
<span class="" style="left:1248.65px">Telkomsel</span>
<span class="" style="left:1377.65px">null</span>
<span class="" style="left:1473.90px">false</span>
<span class="lk" style="left:1564.90px">Details</span>
<svg class="and" style="left:467.5px" width="13" height="13" viewBox="0 0 13 13"><path d="M0.5 11.8V4.7Q0.5 1.5 3.7 1.5H8Q11.2 1.5 11.2 4.7V11.8Z" fill="#6cc64a"/><circle cx="2.9" cy="1.1" r="0.75" fill="#6cc64a"/><circle cx="9.4" cy="1.1" r="0.75" fill="#6cc64a"/><rect x="3.1" y="3.6" width="1.3" height="1.1" fill="#eef6ea"/><rect x="7.7" y="3.6" width="2" height="1.1" fill="#e4ecf6"/><circle cx="3.9" cy="8.1" r="0.5" fill="#3d6a34"/><circle cx="6.9" cy="8.1" r="0.5" fill="#3d6a34"/><circle cx="8.9" cy="7.1" r="0.5" fill="#3d6a34"/></svg>
</div>
<div class="hr" style="top:620.000px"></div>
<div class="row" style="top:621.000px;height:35.375px">
<span class="" style="left:9.40px">18:49:24 21-05</span>
<span class="" style="left:181.90px">black</span>
<span class="" style="left:256.40px">m.facebook.com</span>
<span class="" style="left:393.90px">ID</span>
<span class="" style="left:500.15px">Android 11</span>
<span class="" style="left:716.90px">Facebook</span>
<span class="" style="left:821.90px">530.0.0</span>
<span class="" style="left:921.40px">id-id</span>
<span class="" style="left:978.15px">36.68.219.170</span>
<span class="" style="left:1094.40px">Weightloss_test_ID_FB</span>
<span class="" style="left:1248.65px">PT Telkom Indonesia</span>
<span class="" style="left:1377.65px">null</span>
<span class="" style="left:1473.90px">false</span>
<span class="lk" style="left:1564.90px">Details</span>
<svg class="and" style="left:467.5px" width="13" height="13" viewBox="0 0 13 13"><path d="M0.5 11.8V4.7Q0.5 1.5 3.7 1.5H8Q11.2 1.5 11.2 4.7V11.8Z" fill="#6cc64a"/><circle cx="2.9" cy="1.1" r="0.75" fill="#6cc64a"/><circle cx="9.4" cy="1.1" r="0.75" fill="#6cc64a"/><rect x="3.1" y="3.6" width="1.3" height="1.1" fill="#eef6ea"/><rect x="7.7" y="3.6" width="2" height="1.1" fill="#e4ecf6"/><circle cx="3.9" cy="8.1" r="0.5" fill="#3d6a34"/><circle cx="6.9" cy="8.1" r="0.5" fill="#3d6a34"/><circle cx="8.9" cy="7.1" r="0.5" fill="#3d6a34"/></svg>
</div>
<div class="hr" style="top:656.375px"></div>
<div class="row" style="top:657.375px;height:28.625px">
<span class="" style="left:9.40px">18:42:50 21-05</span>
<span class="" style="left:181.90px">black</span>
<span class="" style="left:256.40px">m.facebook.com</span>
<span class="" style="left:393.90px">ID</span>
<span class="" style="left:500.15px">Android 14</span>
<span class="" style="left:716.90px">Facebook</span>
<span class="" style="left:821.90px">530.0.0</span>
<span class="" style="left:921.40px">id</span>
<span class="" style="left:978.15px">103.129.172.30</span>
<span class="" style="left:1094.40px">Weightloss_test_ID_FB</span>
<span class="" style="left:1248.65px">MyRepublic Indonesia</span>
<span class="" style="left:1377.65px">null</span>
<span class="" style="left:1473.90px">false</span>
<span class="lk" style="left:1564.90px">Details</span>
<svg class="and" style="left:467.5px" width="13" height="13" viewBox="0 0 13 13"><path d="M0.5 11.8V4.7Q0.5 1.5 3.7 1.5H8Q11.2 1.5 11.2 4.7V11.8Z" fill="#6cc64a"/><circle cx="2.9" cy="1.1" r="0.75" fill="#6cc64a"/><circle cx="9.4" cy="1.1" r="0.75" fill="#6cc64a"/><rect x="3.1" y="3.6" width="1.3" height="1.1" fill="#eef6ea"/><rect x="7.7" y="3.6" width="2" height="1.1" fill="#e4ecf6"/><circle cx="3.9" cy="8.1" r="0.5" fill="#3d6a34"/><circle cx="6.9" cy="8.1" r="0.5" fill="#3d6a34"/><circle cx="8.9" cy="7.1" r="0.5" fill="#3d6a34"/></svg>
</div>
<div class="hr" style="top:691px;width:1663px"></div>
</div>
</body></html>
